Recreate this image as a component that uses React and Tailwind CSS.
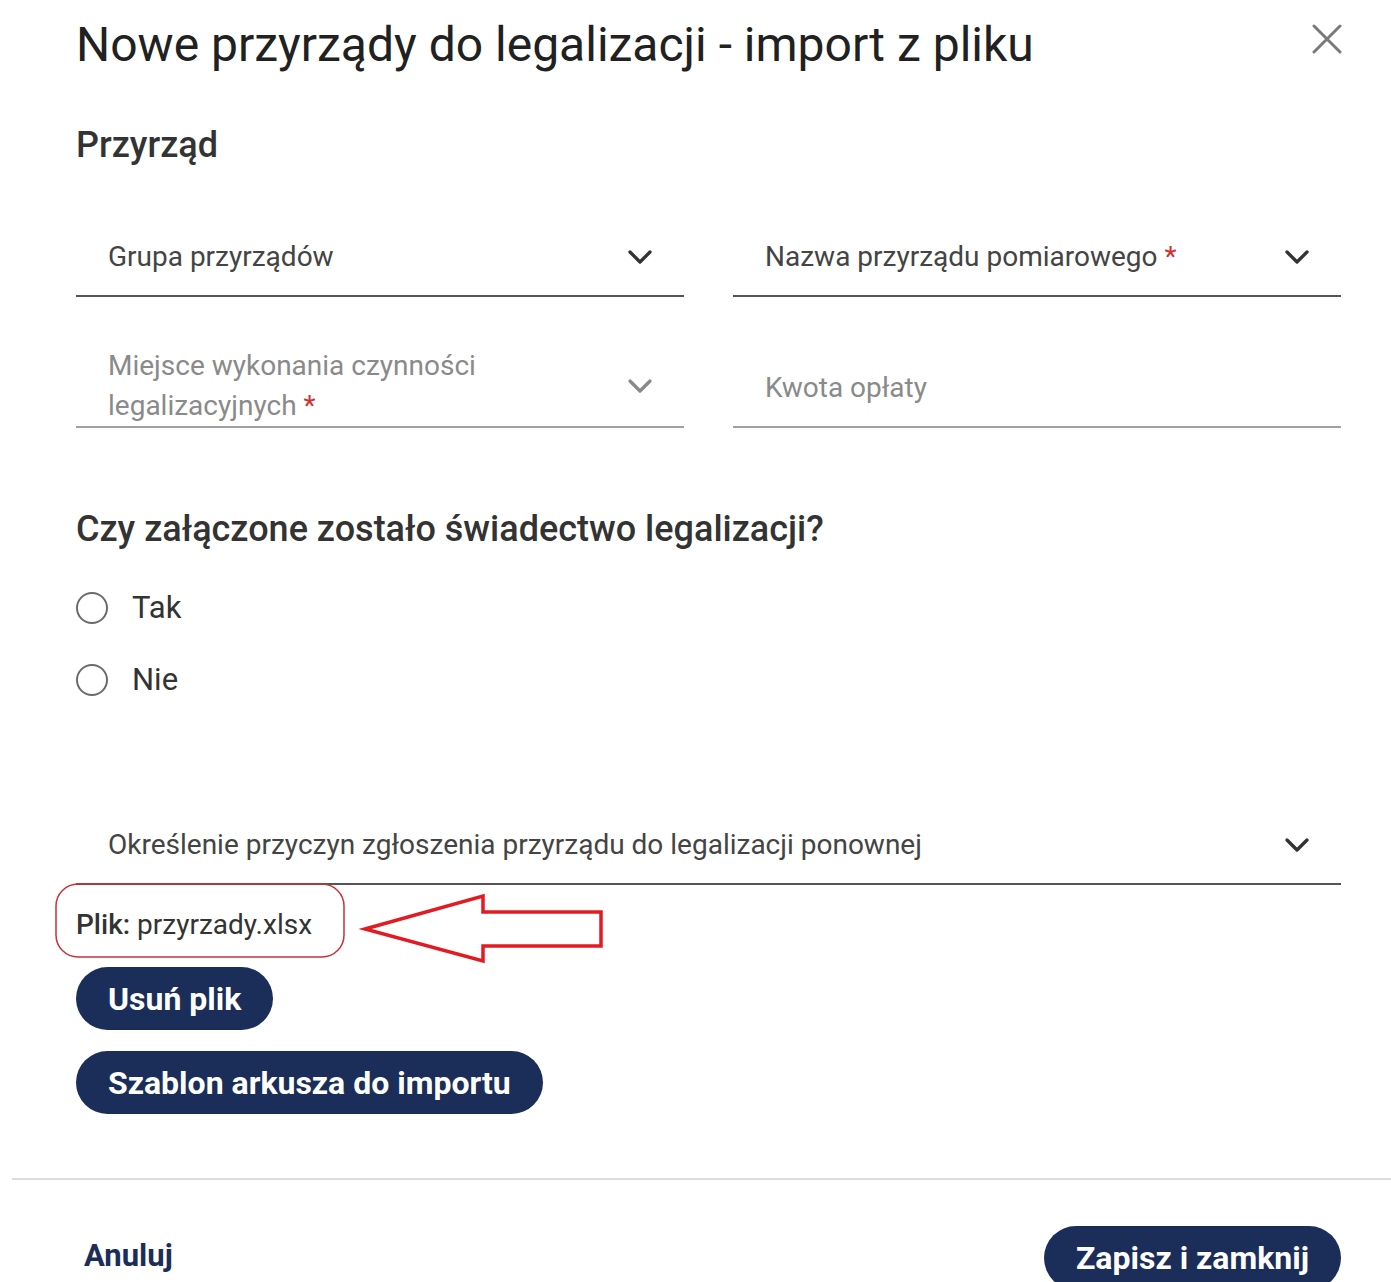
import { ChevronDown } from "lucide-react";

const font = { fontFamily: "Roboto, 'Liberation Sans', sans-serif" };

function SelectField({ label, required, disabled, twoLine, noArrow }) {
  return (
    <div
      className={`flex items-end justify-between pl-8 pr-[24px] h-[91px] ${
        twoLine ? "pb-0" : "pb-[18px]"
      } ${disabled ? "border-b-2 border-[#a0a0a0]" : "border-b-2 border-[#555]"}`}
    >
      <span
        className={`text-[28px] leading-[40px] ${
          disabled ? "text-[#8a8a8a]" : "text-[#444]"
        }`}
      >
        {label}
        {required && <span className="text-[#d32f2f]"> *</span>}
      </span>
      {!noArrow && (
        <span
          className={`flex items-center ${twoLine ? "h-[80px]" : "h-[40px]"}`}
        >
          <ChevronDown
            size={40}
            strokeWidth={2}
            className={disabled ? "text-[#8a8a8a]" : "text-[#333]"}
          />
        </span>
      )}
    </div>
  );
}

function Radio({ label }) {
  return (
    <label className="flex items-center gap-6 h-[40px]">
      <span className="w-[32px] h-[32px] rounded-full border-2 border-[#6b6b6b]" />
      <span className="text-[31px] text-[#333]">{label}</span>
    </label>
  );
}

function PillButton({ children, className = "" }) {
  return (
    <button
      className={`h-[63px] rounded-full bg-[#1b2e5a] px-8 text-[32px] font-bold text-white ${className}`}
    >
      {children}
    </button>
  );
}

export default function App() {
  return (
    <div className="relative w-[1391px] h-[1282px] overflow-hidden bg-white" style={font}>
      <div className="pl-[12px]">
        <div className="pl-[64px] pr-[50px]">
          <div className="flex items-start justify-between pt-[14px]">
            <h1 className="text-[48px] leading-[62px] text-[#212121]">
              Nowe przyrządy do legalizacji - import z pliku
            </h1>
            <svg width="30" height="30" viewBox="0 0 30 30" className="mt-[10px] -mr-[1px]">
              <path
                d="M2 2 L28 28 M28 2 L2 28"
                stroke="#7a7a7a"
                strokeWidth="3"
                strokeLinecap="round"
              />
            </svg>
          </div>

          <h2 className="mt-[47px] text-[36px] leading-[44px] font-medium text-[#333]">
            Przyrząd
          </h2>

          <div className="mt-[39px] grid grid-cols-2 gap-x-[49px] gap-y-[40px]">
            <SelectField label="Grupa przyrządów" />
            <SelectField label="Nazwa przyrządu pomiarowego" required />
            <SelectField
              label={
                <>
                  Miejsce wykonania czynności
                  <br />
                  legalizacyjnych
                </>
              }
              required
              disabled
              twoLine
            />
            <SelectField label="Kwota opłaty" disabled noArrow />
          </div>

          <h2 className="mt-[79px] text-[36px] leading-[44px] font-medium text-[#333]">
            Czy załączone zostało świadectwo legalizacji?
          </h2>

          <div className="mt-[37px] flex flex-col gap-[32px]">
            <Radio label="Tak" />
            <Radio label="Nie" />
          </div>

          <div className="mt-[94px]">
            <SelectField label="Określenie przyczyn zgłoszenia przyrządu do legalizacji ponownej" />
          </div>

          <p className="mt-[20px] text-[28px] leading-[40px] text-[#333]">
            <span className="font-medium">Plik:</span> przyrzady.xlsx
          </p>

          <div className="mt-[22px] flex flex-col items-start gap-[21px]">
            <PillButton>Usuń plik</PillButton>
            <PillButton>Szablon arkusza do importu</PillButton>
          </div>
        </div>

        <div className="mt-[64px] h-[2px] bg-[#dcdcdc]" />

        <div className="flex items-center justify-between pl-[72px] pr-[50px] pt-[46px]">
          <span className="-mt-[4px] text-[31px] font-bold text-[#1b2e5a]">Anuluj</span>
          <PillButton className="h-[64px]">Zapisz i zamknij</PillButton>
        </div>
      </div>

      {/* red markup around the file name */}
      <svg
        className="pointer-events-none absolute left-0 top-0"
        width="1391"
        height="1282"
        viewBox="0 0 1391 1282"
      >
        <rect
          x="56"
          y="884"
          width="288"
          height="73"
          rx="22"
          fill="none"
          stroke="#c8323a"
          strokeWidth="1.5"
        />
        <polygon
          points="365,929 483,896 483,912 601,912 601,946 483,946 483,961"
          fill="none"
          stroke="#e21b23"
          strokeWidth="3.5"
          strokeLinejoin="miter"
        />
      </svg>
    </div>
  );
}
